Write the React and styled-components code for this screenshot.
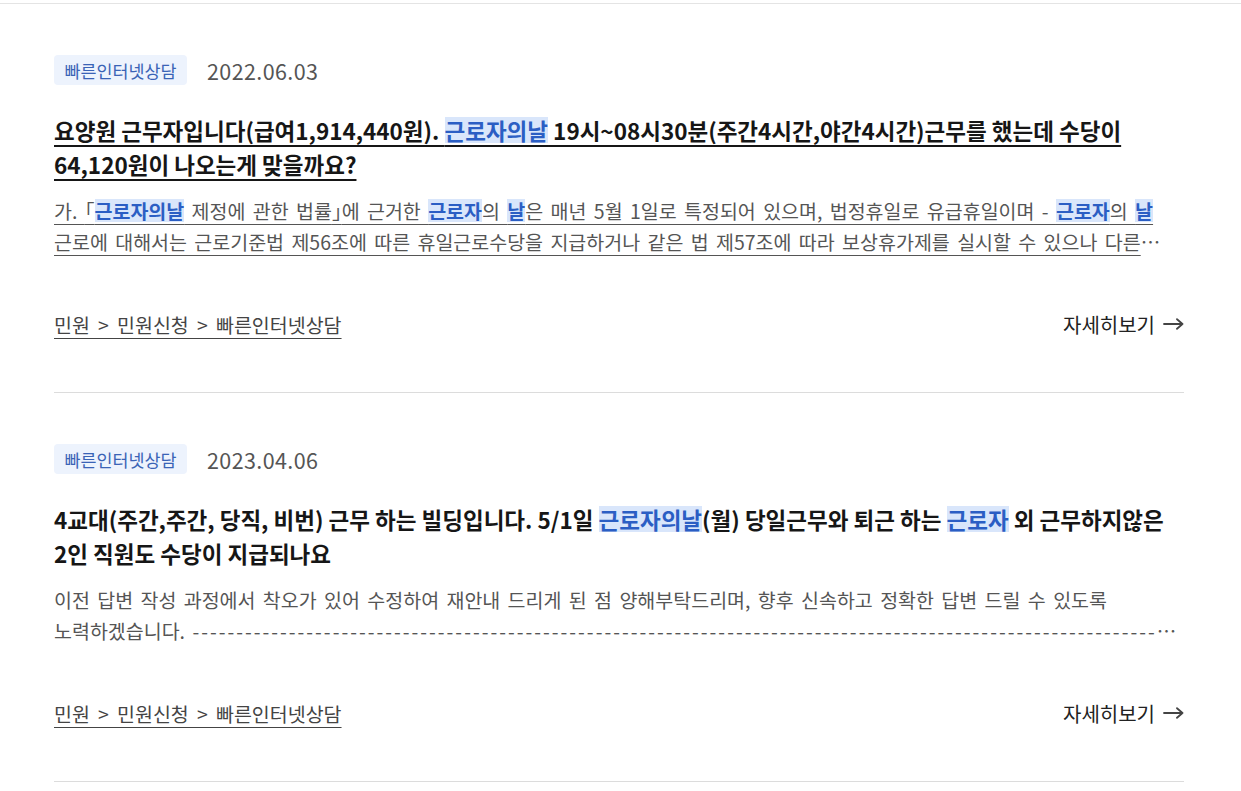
import React from "react";
import styled, { createGlobalStyle, css } from "styled-components";

const GlobalStyle = createGlobalStyle`
  html, body { margin: 0; padding: 0; background: #ffffff; }
  body {
    font-family: "Noto Sans CJK KR", "Noto Sans", sans-serif;
    color: #222;
  }
`;

const Page = styled.div`
  margin-top: 3px;
  border-top: 1px solid #e4e4e4;
`;

const List = styled.ul`
  list-style: none;
  margin: 0;
  padding: 0 57px 0 54px;
`;

const Item = styled.li`
  padding: 51px 0 55px;
  border-bottom: 1px solid #dcdcdc;
`;

const Meta = styled.div`
  display: flex;
  align-items: center;
  gap: 20px;
  height: 30px;
`;

const Badge = styled.span`
  display: inline-flex;
  align-items: center;
  height: 30px;
  padding: 0 10.5px;
  border-radius: 4px;
  background: #edf3fd;
  color: #3a63b6;
  font-size: 17.4px;
`;

const DateText = styled.span`
  font-size: 21.5px;
  color: #555;
  letter-spacing: 0.4px;
`;

const Title = styled.a`
  display: block;
  margin-top: 28px;
  font-size: 22.5px;
  font-weight: 700;
  line-height: 34px;
  color: #161616;
  text-decoration: ${(p) => (p.$active ? "underline" : "none")};
  text-decoration-thickness: 2px;
  text-underline-offset: 5px;
  word-break: keep-all;
`;

const Mark = styled.mark`
  color: #2b5ec4;
  background: linear-gradient(
    transparent 10%,
    #d9e6fb 10%,
    #d9e6fb 90%,
    transparent 90%
  );
  ${(p) =>
    p.$bold &&
    css`
      font-weight: 700;
    `}
`;

const Bracket = styled.span`
  font-feature-settings: "halt";
`;

const Desc = styled.p`
  margin: 14px 0 0;
  font-size: 19.5px;
  line-height: 31px;
  word-spacing: 3px;
  color: #555;
  display: -webkit-box;
  -webkit-box-orient: vertical;
  -webkit-line-clamp: 2;
  overflow: hidden;
  word-break: keep-all;
  text-decoration: ${(p) => (p.$active ? "underline" : "none")};
  text-decoration-thickness: 1px;
  text-underline-offset: 5px;
`;

const Dashes = styled.span`
  word-break: break-all;
  letter-spacing: 2px;
`;

const Footer = styled.div`
  display: flex;
  justify-content: space-between;
  align-items: center;
  margin-top: 54px;
  height: 26px;
`;

const Crumbs = styled.a`
  font-size: 19.5px;
  color: #444;
  text-decoration: underline;
  text-decoration-thickness: 1px;
  text-underline-offset: 5px;
  word-spacing: 3.8px;
`;

const More = styled.a`
  display: inline-flex;
  align-items: center;
  gap: 8px;
  font-size: 20px;
  color: #222;
  text-decoration: none;
`;

const Arrow = () => (
  <svg width="21" height="12" viewBox="0 0 21 12" fill="none">
    <path d="M1 6H19.5M14 1.2L19.5 6L14 10.8" stroke="#444" strokeWidth="1.8" strokeLinecap="round" strokeLinejoin="round" />
  </svg>
);

const Breadcrumb = () => <Crumbs href="#">민원 &gt; 민원신청 &gt; 빠른인터넷상담</Crumbs>;

export default function App() {
  const dashes = "-".repeat(320);
  return (
    <>
      <GlobalStyle />
      <Page>
        <List>
          <Item>
            <Meta>
              <Badge>빠른인터넷상담</Badge>
              <DateText>2022.06.03</DateText>
            </Meta>
            <Title href="#" $active>
              요양원 근무자입니다(급여1,914,440원). <Mark>근로자의날</Mark> 19시~08시30분(주간4시간,야간4시간)근무를 했는데 수당이 64,120원이 나오는게 맞을까요?
            </Title>
            <Desc $active>
              가. <Bracket>「</Bracket><Mark $bold>근로자의날</Mark> 제정에 관한 법률<Bracket>」</Bracket>에 근거한 <Mark $bold>근로자</Mark>의 <Mark $bold>날</Mark>은 매년 5월 1일로 특정되어 있으며, 법정휴일로 유급휴일이며 - <Mark $bold>근로자</Mark>의 <Mark $bold>날</Mark> 근로에 대해서는 근로기준법 제56조에 따른 휴일근로수당을 지급하거나 같은 법 제57조에 따라 보상휴가제를 실시할 수 있으나 다른 법령에 특별한 규정이 있는 경우에는 그에 따릅니다.
            </Desc>
            <Footer>
              <Breadcrumb />
              <More href="#">
                자세히보기 <Arrow />
              </More>
            </Footer>
          </Item>
          <Item>
            <Meta>
              <Badge>빠른인터넷상담</Badge>
              <DateText>2023.04.06</DateText>
            </Meta>
            <Title href="#">
              4교대(주간,주간, 당직, 비번) 근무 하는 빌딩입니다. 5/1일 <Mark>근로자의날</Mark>(월) 당일근무와 퇴근 하는 <Mark>근로자</Mark> 외 근무하지않은 2인 직원도 수당이 지급되나요
            </Title>
            <Desc>
              이전 답변 작성 과정에서 착오가 있어 수정하여 재안내 드리게 된 점 양해부탁드리며, 향후 신속하고 정확한 답변 드릴 수 있도록 노력하겠습니다. <Dashes>{dashes}</Dashes>
            </Desc>
            <Footer>
              <Breadcrumb />
              <More href="#">
                자세히보기 <Arrow />
              </More>
            </Footer>
          </Item>
        </List>
      </Page>
    </>
  );
}
